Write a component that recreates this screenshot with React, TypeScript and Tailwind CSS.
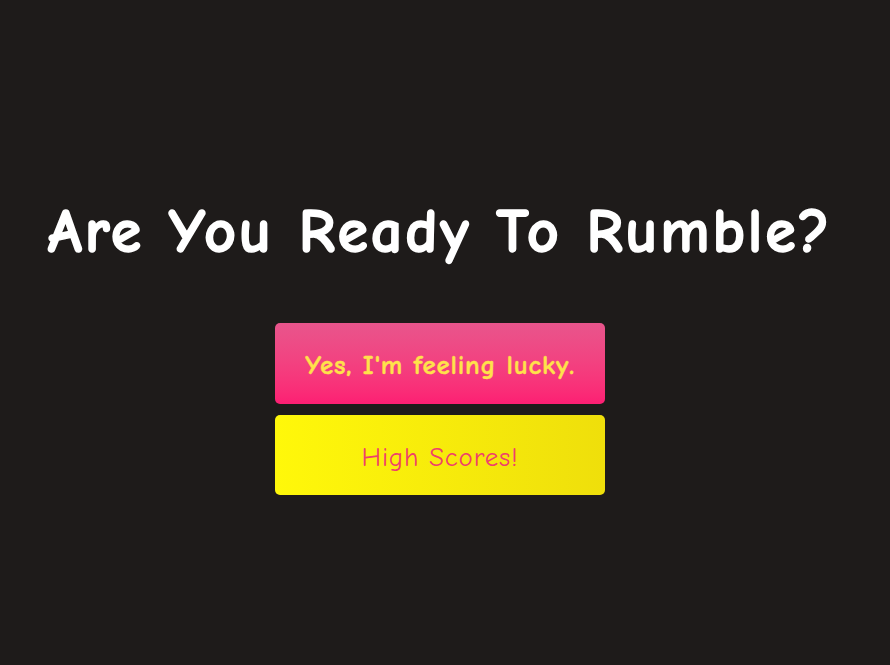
export default function App() {
  return (
    <div
      className="min-h-screen w-full bg-[#1e1b1a] flex flex-col items-center pt-[194px] pr-[10px]"
      style={{ fontFamily: '"Comic Sans MS", "Comic Neue", Lato, "Open Sans", sans-serif' }}
    >
      <h1 className="text-[62px] leading-[76px] font-bold text-white tracking-[2.8px] whitespace-nowrap [-webkit-text-stroke:1.5px_white]">
        Are You Ready To Rumble?
      </h1>
      <div className="mt-[53px] flex flex-col gap-[11px]">
        <button className="w-[330px] h-[81px] pt-[6px] rounded-[5px] bg-gradient-to-b from-[#e8558c] to-[#fd1e73] text-[#ffe24a] text-[27px] tracking-[0.8px] font-bold [-webkit-text-stroke:0.4px_#ffe24a]">
          Yes, I'm feeling lucky.
        </button>
        <button className="w-[330px] h-[80px] pt-[6px] rounded-[5px] bg-gradient-to-r from-[#fff80a] to-[#efdf0b] text-[#ef3f6c] text-[27px] tracking-[0.8px]">
          High Scores!
        </button>
      </div>
    </div>
  );
}
